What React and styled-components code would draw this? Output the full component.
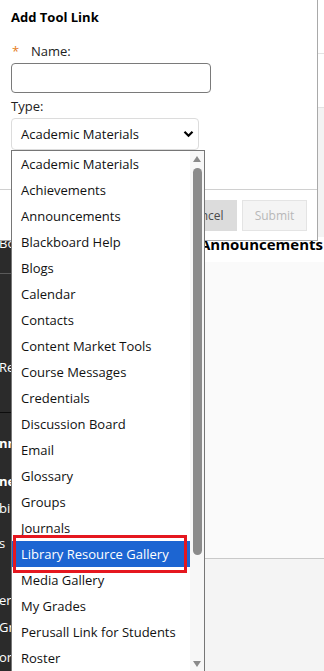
import React from "react";
import styled, { createGlobalStyle } from "styled-components";

const GlobalStyle = createGlobalStyle`
  html, body { margin: 0; padding: 0; }
  body {
    font-family: "Open Sans", "Liberation Sans", sans-serif;
    background: #fff;
  }
  * { box-sizing: border-box; }
`;

const toolTypes = [
  "Academic Materials",
  "Achievements",
  "Announcements",
  "Blackboard Help",
  "Blogs",
  "Calendar",
  "Contacts",
  "Content Market Tools",
  "Course Messages",
  "Credentials",
  "Discussion Board",
  "Email",
  "Glossary",
  "Groups",
  "Journals",
  "Library Resource Gallery",
  "Media Gallery",
  "My Grades",
  "Perusall Link for Students",
  "Roster",
];

// menu fragments of the course sidebar that peek out at the left edge
const navItems = [
  { kind: "text", text: "Bo", gap: 0 },
  { kind: "rule", color: "#5a5a5a", gap: 21 },
  { kind: "text", text: "Re", gap: 84 },
  { kind: "rule", color: "#0d0d0d", gap: 36 },
  { kind: "text", text: "nn", gap: 21, bold: true },
  { kind: "text", text: "ne", gap: 20, bold: true },
  { kind: "text", text: "bi", gap: 9 },
  { kind: "text", text: "s", gap: 17 },
  { kind: "text", text: "er", gap: 39 },
  { kind: "text", text: "Gro", gap: 9 },
  { kind: "text", text: "or", gap: 12 },
];

const Page = styled.div`
  position: relative;
  width: 324px;
  height: 671px;
  overflow: hidden;
  display: flex;
  background: #fafafa;
`;

const Sidebar = styled.nav`
  width: 11px;
  flex: none;
  background: #2b2b2b;
  color: #fff;
  padding-top: 234px;
  overflow: hidden;
`;

const NavFrag = styled.div`
  height: 18px;
  line-height: 18px;
  margin-top: ${(p) => p.$gap}px;
  margin-left: -1px;
  font-size: 13px;
  font-weight: ${(p) => (p.$bold ? 700 : 400)};
  white-space: nowrap;
`;

const NavRule = styled.div`
  height: 1px;
  margin-top: ${(p) => p.$gap}px;
  background: ${(p) => p.$color};
`;

const Main = styled.main`
  flex: 1;
  min-width: 0;
  display: flex;
  flex-direction: column;
`;

const HeaderBand = styled.div`
  height: ${(p) => p.$h}px;
  flex: none;
  background: ${(p) => p.$bg};
  border-bottom: ${(p) => (p.$line ? "1px solid #e3e3e3" : "none")};
`;

const HeadingRow = styled.div`
  height: 25px;
  flex: none;
  display: flex;
  justify-content: flex-end;
  align-items: flex-start;
  background: #fff;
  overflow: hidden;
`;

const Heading = styled.h2`
  margin: 0 1px 0 0;
  font-size: 15px;
  font-weight: 700;
  color: #000;
  white-space: nowrap;
  line-height: 15px;
`;

const ContentArea = styled.section`
  height: 297px;
  flex: none;
  background: #fafafa;
  border-bottom: 1px solid #c9c9c9;
`;

const LowerArea = styled.section`
  flex: 1;
  background: #f4f4f4;
`;

const Modal = styled.div`
  position: absolute;
  top: 0;
  left: 0;
  width: 318px;
  height: 241px;
  background: #fff;
  border-right: 1px solid #a9a9a9;
  border-bottom: 1px solid #a9a9a9;
  display: flex;
  flex-direction: column;
`;

const ModalBody = styled.div`
  flex: 1;
  padding: 7px 0 0 11px;
`;

const Title = styled.h1`
  margin: 0;
  font-size: 13px;
  font-weight: 700;
  line-height: 20px;
  color: #000;
`;

const Label = styled.label`
  display: flex;
  align-items: center;
  margin-top: ${(p) => p.$gap}px;
  font-size: 13px;
  line-height: 18px;
  color: #222;
`;

const Required = styled.span`
  color: #e67e1b;
  width: 20px;
  padding-left: 1px;
  font-size: 13px;
`;

const TextInput = styled.div`
  margin-top: 3px;
  width: 200px;
  height: 30px;
  border: 1px solid #7a7a7a;
  border-radius: 4px;
  background: #fff;
`;

const SelectBox = styled.div`
  position: relative;
  margin-top: 3px;
  width: 188px;
  height: 32px;
  border: 1px solid #dcdcdc;
  border-radius: 4px;
  display: flex;
  align-items: center;
  justify-content: space-between;
  padding: 0 4px 0 9px;
  font-size: 13px;
  color: #111;
`;

const Dropdown = styled.div`
  position: absolute;
  top: 31px;
  left: -1px;
  width: 194px;
  height: 522px;
  border: 1px solid #767676;
  background: #fff;
  display: flex;
  z-index: 2;
`;

const OptionList = styled.ul`
  list-style: none;
  margin: 0;
  padding: 0;
  flex: 1;
`;

const Option = styled.li`
  position: relative;
  height: 26px;
  line-height: 26px;
  padding-left: 9px;
  font-size: 13px;
  white-space: nowrap;
  color: ${(p) => (p.$active ? "#fff" : "#111")};
  background: ${(p) => (p.$active ? "#1c65d2" : "transparent")};

  ${(p) =>
    p.$active &&
    `
    &::after {
      content: "";
      position: absolute;
      top: -6px;
      bottom: -6px;
      left: 1px;
      right: 3px;
      border: 3px solid #e5171f;
    }
  `}
`;

const Scrollbar = styled.div`
  width: 14px;
  flex: none;
  background: #f7f7f7;
  display: flex;
  flex-direction: column;
  align-items: center;
  padding: 5px 0 4px;
`;

const Arrow = styled.span`
  width: 0;
  height: 0;
  border-left: 4px solid transparent;
  border-right: 4px solid transparent;
  ${(p) =>
    p.$down
      ? "border-top: 6px solid #8a8a8a; margin-top: auto;"
      : "border-bottom: 6px solid #8a8a8a;"}
`;

const Thumb = styled.span`
  margin-top: 6px;
  width: 9px;
  height: 387px;
  border-radius: 5px;
  background: #8b8b8b;
`;

const Footer = styled.div`
  height: 51px;
  flex: none;
  border-top: 1px solid #d0d0d0;
  display: flex;
  justify-content: flex-end;
  align-items: center;
  gap: 5px;
  padding-right: 10px;
`;

const Button = styled.button`
  height: 31px;
  width: ${(p) => p.$w}px;
  font-family: inherit;
  font-size: 12px;
  border-radius: 0;
  border: 1px solid ${(p) => (p.$disabled ? "#e4e4e4" : "#dcdcdc")};
  background: ${(p) => (p.$disabled ? "#f4f4f4" : "#dcdcdc")};
  color: ${(p) => (p.$disabled ? "#b8b8b8" : "#4a4a4a")};
  padding: 0;
`;

const Chevron = () => (
  <svg width="11" height="8" viewBox="0 0 11 8">
    <path d="M1.5 1.8 L5.5 5.8 L9.5 1.8" fill="none" stroke="#000" strokeWidth="2.2" />
  </svg>
);

export default function App() {
  return (
    <>
      <GlobalStyle />
      <Page>
        <Sidebar>
          {navItems.map((item, i) =>
            item.kind === "rule" ? (
              <NavRule key={i} $gap={item.gap} $color={item.color} />
            ) : (
              <NavFrag key={i} $gap={item.gap} $bold={item.bold}>
                {item.text}
              </NavFrag>
            )
          )}
        </Sidebar>
        <Main>
          <HeaderBand $h={54} $bg="#fff" $line />
          <HeaderBand $h={54} $bg="#fff" $line />
          <HeaderBand $h={129} $bg="#f3f3f3" />
          <HeadingRow>
            <Heading>Announcements</Heading>
          </HeadingRow>
          <ContentArea />
          <LowerArea />
        </Main>

        <Modal>
          <ModalBody>
            <Title>Add Tool Link</Title>
            <Label $gap={15}>
              <Required>*</Required>
              Name:
            </Label>
            <TextInput />
            <Label $gap={4}>Type:</Label>
            <SelectBox>
              <span>Academic Materials</span>
              <Chevron />
              <Dropdown>
                <OptionList>
                  {toolTypes.map((t) => (
                    <Option key={t} $active={t === "Library Resource Gallery"}>
                      {t}
                    </Option>
                  ))}
                </OptionList>
                <Scrollbar>
                  <Arrow />
                  <Thumb />
                  <Arrow $down />
                </Scrollbar>
              </Dropdown>
            </SelectBox>
          </ModalBody>
          <Footer>
            <Button $w={64}>Cancel</Button>
            <Button $w={65} $disabled>
              Submit
            </Button>
          </Footer>
        </Modal>
      </Page>
    </>
  );
}
